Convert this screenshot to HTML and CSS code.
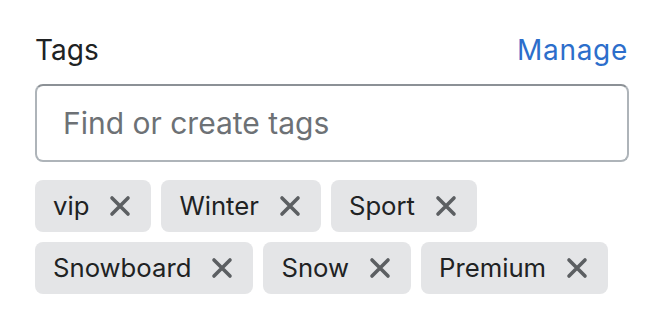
FILE: index.html
```html
<!DOCTYPE html>
<html lang="en">
<head>
<meta charset="utf-8">
<title>Tags</title>
<link rel="stylesheet" href="styles.css">
</head>
<body>
<div class="tags-field">
  <div class="label-row">
    <label class="label" for="tag-input">Tags</label>
    <a class="manage" href="#">Manage</a>
  </div>
  <div class="input-wrap">
    <input id="tag-input" class="input" type="text" placeholder="Find or create tags">
  </div>
  <div class="chips">
    <span class="chip"><span class="chip-text">vip</span><span class="chip-x"><svg viewBox="0 0 22 22"><path d="M3 3L19 19M19 3L3 19"/></svg></span></span>
    <span class="chip"><span class="chip-text">Winter</span><span class="chip-x"><svg viewBox="0 0 22 22"><path d="M3 3L19 19M19 3L3 19"/></svg></span></span>
    <span class="chip"><span class="chip-text">Sport</span><span class="chip-x"><svg viewBox="0 0 22 22"><path d="M3 3L19 19M19 3L3 19"/></svg></span></span>
    <span class="chip"><span class="chip-text">Snowboard</span><span class="chip-x"><svg viewBox="0 0 22 22"><path d="M3 3L19 19M19 3L3 19"/></svg></span></span>
    <span class="chip"><span class="chip-text">Snow</span><span class="chip-x"><svg viewBox="0 0 22 22"><path d="M3 3L19 19M19 3L3 19"/></svg></span></span>
    <span class="chip"><span class="chip-text">Premium</span><span class="chip-x"><svg viewBox="0 0 22 22"><path d="M3 3L19 19M19 3L3 19"/></svg></span></span>
  </div>
</div>
</body>
</html>
```
FILE: styles.css
```css
html, body {
  margin: 0;
  padding: 0;
  background: #ffffff;
}
body {
  font-family: Inter, "Noto Sans", "Liberation Sans", sans-serif;
  color: #202223;
}
.tags-field {
  width: 594px;
  padding: 30px 0 0 35px;
}
.label-row {
  display: flex;
  justify-content: space-between;
  align-items: center;
  height: 40px;
  margin-bottom: 14px;
}
.label {
  font-size: 28px;
  line-height: 40px;
  color: #202223;
}
.manage {
  font-size: 28px;
  line-height: 40px;
  letter-spacing: 0.7px;
  color: #2c6ecb;
  text-decoration: none;
  margin-right: 1px;
}
.input-wrap {
  height: 78px;
  box-sizing: border-box;
  border: 2px solid #aeb4b9;
  border-top-color: #8c9196;
  border-radius: 8px;
  display: flex;
  align-items: center;
  padding: 0 26px;
}
.input {
  border: 0;
  outline: none;
  width: 100%;
  font-family: inherit;
  font-size: 30px;
  color: #202223;
  background: transparent;
  padding: 0;
}
.input::placeholder {
  color: #6d7175;
}
.chips {
  display: flex;
  flex-wrap: wrap;
  gap: 10px;
  margin-top: 18px;
}
.chip {
  display: inline-flex;
  align-items: center;
  height: 52px;
  box-sizing: border-box;
  padding: 0 20px 0 18px;
  background: #e4e5e7;
  border-radius: 8px;
  font-size: 25.7px;
  color: #202223;
}
.chip-text {
  line-height: 40px;
}
.chip-x {
  display: inline-flex;
  margin-left: 20px;
  width: 22px;
  height: 22px;
}
.chip-x svg {
  width: 22px;
  height: 22px;
  stroke: #5c5f62;
  stroke-width: 3.6;
  stroke-linecap: round;
  fill: none;
}
```
